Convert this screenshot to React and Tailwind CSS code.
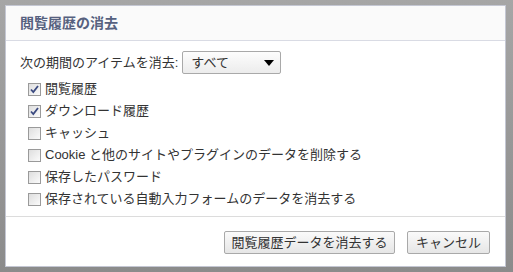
const items = [
  { label: '閲覧履歴', checked: true },
  { label: 'ダウンロード履歴', checked: true },
  { label: 'キャッシュ', checked: false },
  { label: 'Cookie と他のサイトやプラグインのデータを削除する', checked: false },
  { label: '保存したパスワード', checked: false },
  { label: '保存されている自動入力フォームのデータを消去する', checked: false },
];

function Checkbox({ checked }) {
  return (
    <span className="relative flex h-[13px] w-[13px] items-center justify-center border border-[#9a9a9a] bg-gradient-to-br from-[#dedede] to-[#fbfbfb]">
      {checked && (
        <svg width="11" height="11" viewBox="0 0 11 11" className="absolute">
          <path d="M2 5.5 L4.3 8 L9 2" fill="none" stroke="#3b4a80" strokeWidth="1.8" />
        </svg>
      )}
    </span>
  );
}

export default function App() {
  return (
    <div
      className="relative h-[272px] w-[513px] overflow-hidden bg-gradient-to-b from-[#a6a6a6] to-[#8b8b8b] pl-[5px] pt-[5px] text-[13px] text-[#333]"
      style={{ fontFamily: '"Liberation Sans", "Noto Sans CJK JP", sans-serif' }}
    >
      <div className="relative flex h-[262px] w-[501px] flex-col border border-[#c4c7d3] bg-white">
        {/* Header */}
        <div className="flex h-[35px] shrink-0 items-center border-b border-[#d9dbe4] bg-[#fafafa] px-[14px]">
          <span className="text-[14px] font-bold text-[#56617f]">閲覧履歴の消去</span>
        </div>

        {/* Body */}
        <div className="flex flex-col px-[14px] pt-[10px]">
          <div className="flex h-[23px] items-center">
            <span>次の期間のアイテムを消去:</span>
            <div className="ml-[4px] flex h-[23px] w-[99px] items-center justify-between rounded-[2px] border border-[#a9a9a9] bg-gradient-to-b from-[#fdfdfd] to-[#ececec] pl-[8px] pr-[6px]">
              <span>すべて</span>
              <svg width="10" height="6" viewBox="0 0 10 6">
                <path d="M0 0 H10 L5 6 Z" fill="#000" />
              </svg>
            </div>
          </div>

          <div className="mt-[4px] flex flex-col pl-[8px]">
            {items.map((item) => (
              <label key={item.label} className="flex h-[22px] items-center gap-[4px]">
                <Checkbox checked={item.checked} />
                <span>{item.label}</span>
              </label>
            ))}
          </div>
        </div>

        {/* Footer */}
        <div className="mt-[6px] flex justify-end gap-[12px] border-t border-[#dcdcdc] pr-[15px] pt-[14px]">
          <button className="h-[23px] w-[171px] rounded-[2px] border border-[#a9a9a9] bg-gradient-to-b from-[#fafafa] to-[#e6e6e6] text-[13px] text-[#333]">
            閲覧履歴データを消去する
          </button>
          <button className="h-[23px] w-[83px] rounded-[2px] border border-[#a9a9a9] bg-gradient-to-b from-[#fafafa] to-[#e6e6e6] text-[13px] text-[#333]">
            キャンセル
          </button>
        </div>
      </div>
    </div>
  );
}
